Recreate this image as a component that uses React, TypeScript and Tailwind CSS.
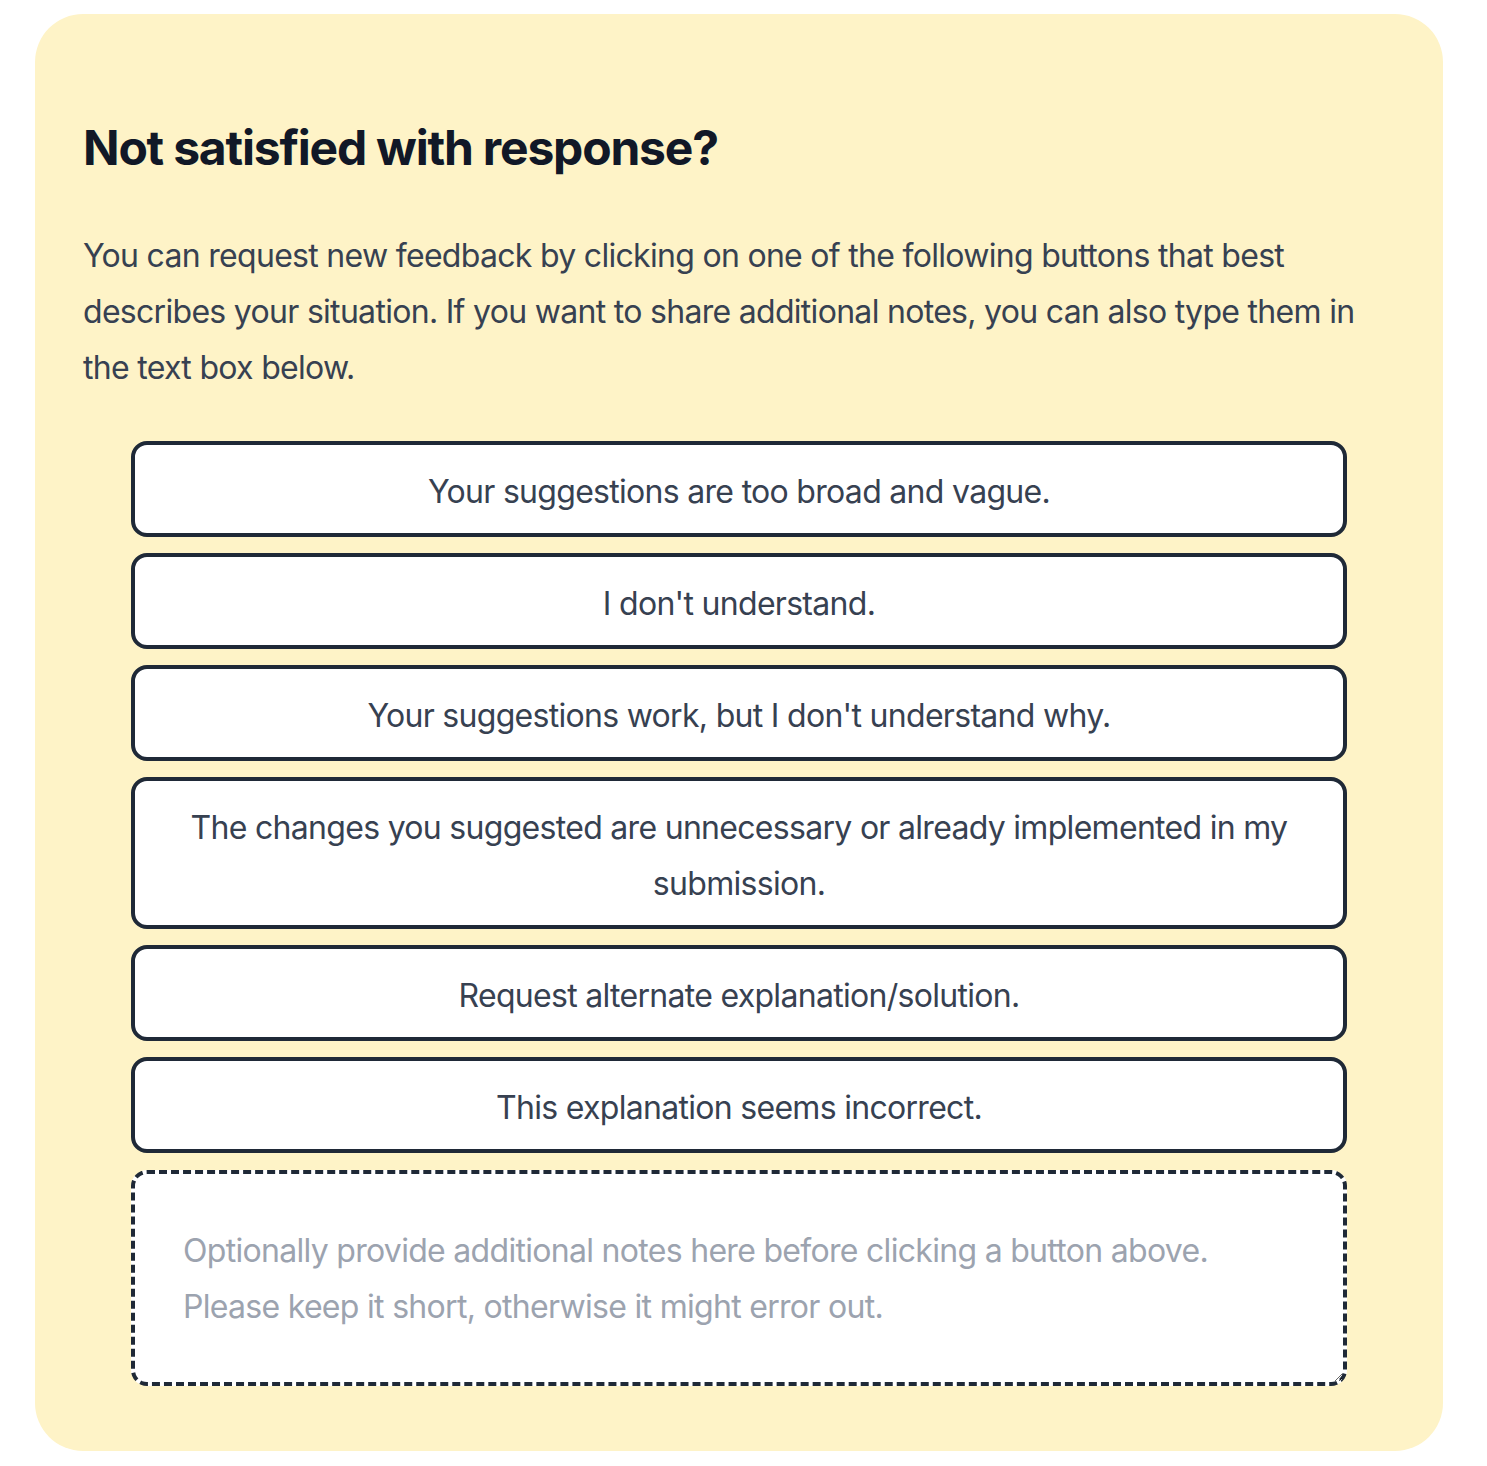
import React from "react";

const options = [
  "Your suggestions are too broad and vague.",
  "I don't understand.",
  "Your suggestions work, but I don't understand why.",
  "The changes you suggested are unnecessary or already implemented in my submission.",
  "Request alternate explanation/solution.",
  "This explanation seems incorrect.",
];

export default function App() {
  return (
    <div className="min-h-[1466px] bg-white pt-[14px] pb-[16px]" style={{ fontFamily: "Inter, 'Noto Sans', sans-serif" }}>
      <div className="ml-[35px] w-[1408px] rounded-[48px] bg-[#fef3c7] px-12 pt-[102px] pb-[65px]">
        <h2 className="text-[48px] font-bold leading-[64px] tracking-[-1.2px] text-[#111827]">Not satisfied with response?</h2>
        <p className="mt-12 text-[32px] leading-[56px] tracking-[-0.7px] text-[#374151]">
          You can request new feedback by clicking on one of the following buttons that best describes your situation. If you want to share additional notes, you can also type them in the text box below.
        </p>
        <div className="mx-12 mt-[45px] flex flex-col gap-4">
          {options.map((o) => (
            <button
              key={o}
              className="w-full rounded-2xl border-4 border-[#1f2937] bg-white px-4 pt-[19px] pb-[13px] text-center text-[32px] leading-[56px] tracking-[-0.7px] text-[#374151]"
            >
              {o}
            </button>
          ))}
          <textarea
            rows={2}
            className="mt-[1px] block w-full rounded-2xl border-4 border-dashed border-[#1f2937] bg-white px-12 pt-[49px] pb-[47px] text-[32px] leading-[56px] tracking-[-0.7px] text-[#374151] placeholder:text-[#9ca3af] outline-none"
            placeholder="Optionally provide additional notes here before clicking a button above. Please keep it short, otherwise it might error out."
          />
        </div>
      </div>
    </div>
  );
}
